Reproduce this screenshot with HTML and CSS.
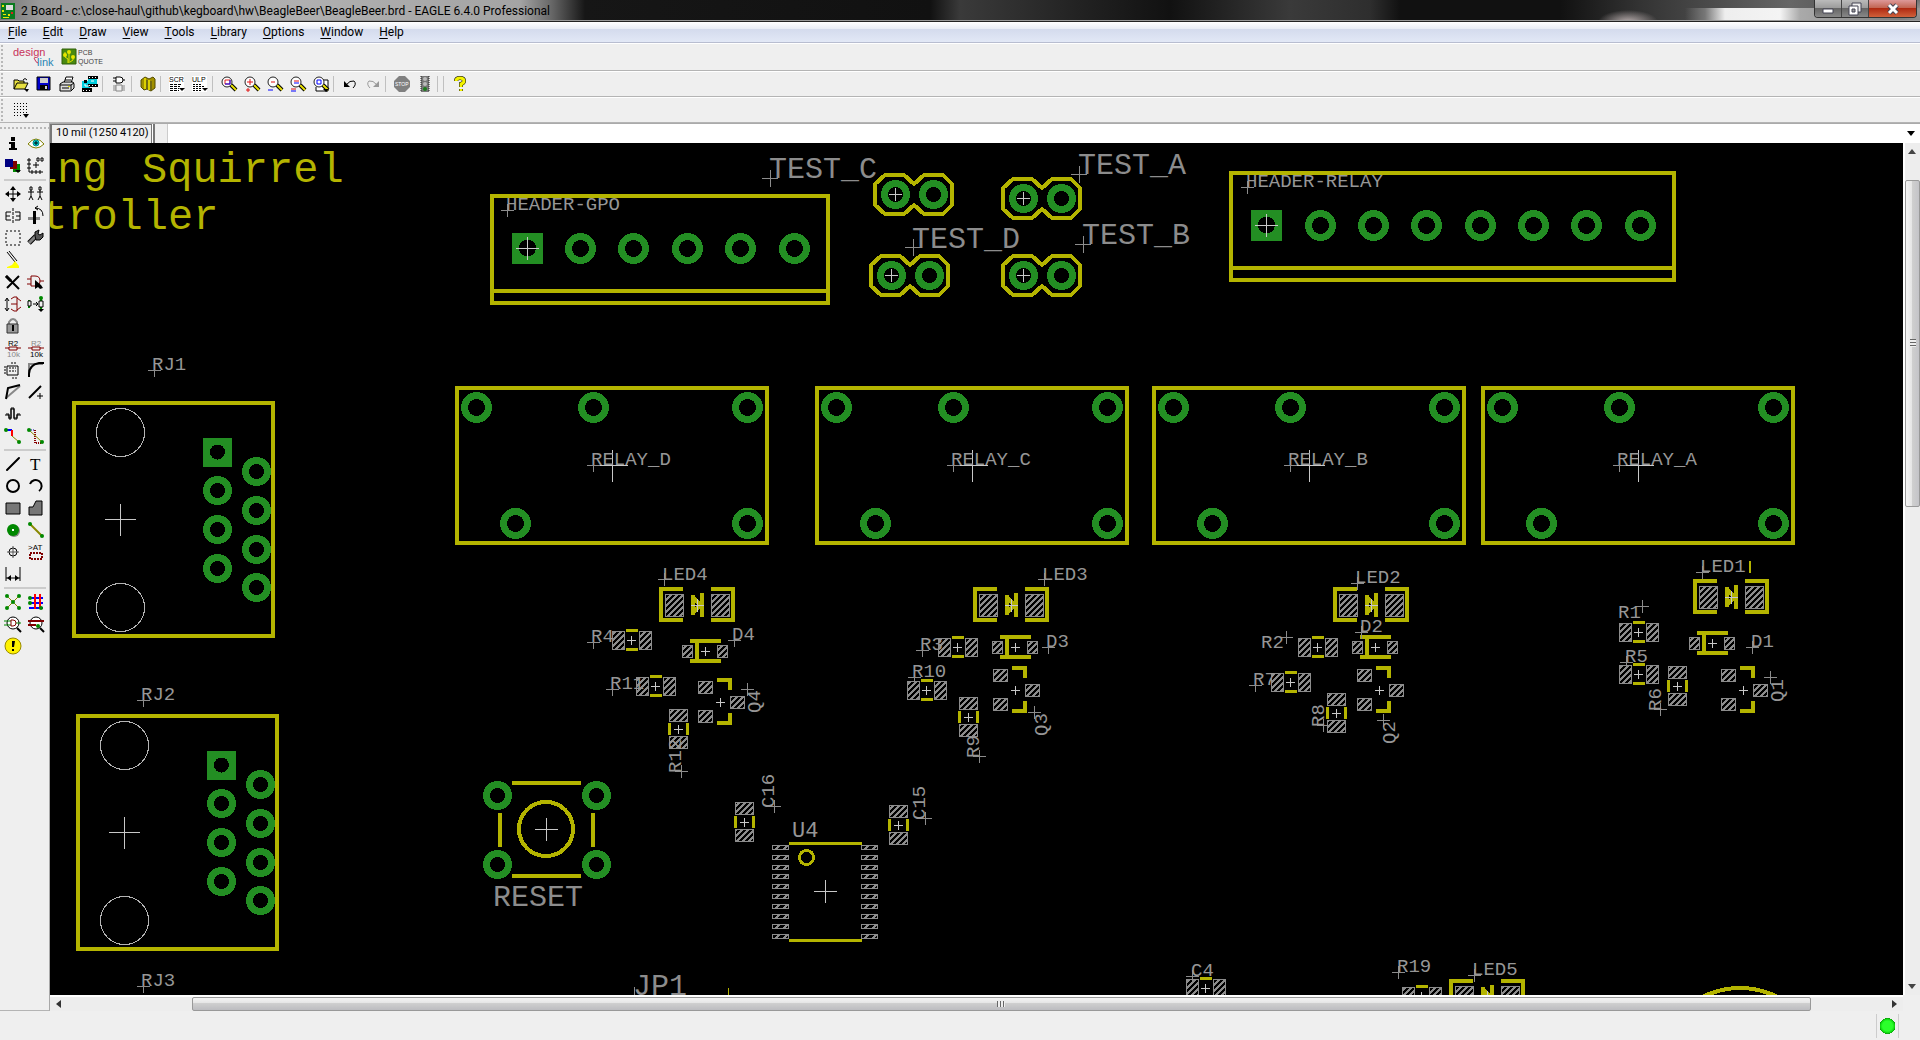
FILE: index.html
```html
<!DOCTYPE html>
<html lang="en">
<head>
<meta charset="utf-8">
<title>2 Board - BeagleBeer.brd - EAGLE 6.4.0 Professional</title>
<link rel="stylesheet" href="styles.css">
</head>
<body>
<header class="titlebar">
  <svg class="appicon" viewBox="0 0 14 16"><path fill="#0a7a1e" d="M0 0h14v16H0z"/><path fill="#ddd" d="M5 2h7v5H5z"/><path fill="#e8e800" d="M1 2h2v2H1zM1 7h2v2H1zM2 11h3v1H2zM7 11h2v2H7zM2 14h6v1H2z"/><path fill="#e02020" d="M10 9h2v2h-2z"/></svg>
  <h1 class="title">2 Board - c:\close-haul\github\kegboard\hw\BeagleBeer\BeagleBeer.brd - EAGLE 6.4.0 Professional</h1>
  <div class="winbtns">
    <button class="win" aria-label="Minimize"><svg width="12" height="12"><path d="M1 6h10v4H1z" fill="#fff" stroke="#445"/></svg></button>
    <button class="win" aria-label="Restore"><svg width="14" height="14"><path d="M4 1h9v9H4z" fill="#eee" stroke="#445"/><path d="M1 4h9v9H1z" fill="#fff" stroke="#445"/><path d="M4 7h3v3H4z" fill="#999" stroke="#445"/></svg></button>
    <button class="win close" aria-label="Close"><svg width="14" height="14"><path d="M3 3l8 8M11 3l-8 8" stroke="#445" stroke-width="5"/><path d="M3 3l8 8M11 3l-8 8" stroke="#fff" stroke-width="3"/></svg></button>
  </div>
</header>
<nav class="menubar">
  <button><u>F</u>ile</button><button><u>E</u>dit</button><button><u>D</u>raw</button><button><u>V</u>iew</button><button><u>T</u>ools</button><button><u>L</u>ibrary</button><button><u>O</u>ptions</button><button><u>W</u>indow</button><button><u>H</u>elp</button>
</nav>
<div class="bar links">
  <button class="wide" aria-label="design link"><svg width="44" height="24"><text class="logo" x="1" y="11" fill="#c8325a">design</text><text class="logo" x="25" y="21" fill="#2a86b4">link</text><path d="M22 13q2 5 4 5" stroke="#c8325a" fill="none"/></svg></button>
  <button class="wide" aria-label="PCB quote"><svg width="44" height="20"><path fill="#4a8a10" stroke="#2f5f08" d="M1 2h14v15H1z"/><path d="M4 5v5l3 2v4M8 4v12M12 10v3l-3 2" stroke="#e6e600" fill="none"/><circle cx="8" cy="5" r="2" fill="#e6e600"/><circle cx="4" cy="8" r="2" fill="#e6e600"/><circle cx="12" cy="10" r="2" fill="#e6e600"/><text class="mini" x="17" y="8" fill="#444">PCB</text><text class="mini" x="17" y="17" fill="#444">QUOTE</text></svg></button>
</div>
<div class="bar actions">
  <button aria-label="Open"><svg viewBox="0 0 16 16"><path d="M1 13V4h4l1 1h5v2M1 13l3-6h11l-3 6z" fill="#e8e040" stroke="#000"/><path d="M10 4q2-3 4 0" fill="none" stroke="#000"/><path d="M11 13h5l-2 3z"/></svg></button>
  <button aria-label="Save"><svg viewBox="0 0 16 16"><path fill="#00c" stroke="#000" d="M1 1h13v13H1z"/><path fill="#ccc" d="M4 2h8v5H4z"/><path d="M4 9h8v5H4z"/><path fill="#ccc" d="M9 10h2v3H9z"/></svg></button>
  <button aria-label="Print"><svg viewBox="0 0 16 16"><path d="M5 7l2-6h7l-2 6M6 4h6" fill="#fff" stroke="#000"/><path d="M1 8l3-2h10l1 2v4l-3 3H1z" fill="#ddd" stroke="#000"/><path d="M1 9h11v5M12 9l3-2M3 12h7" fill="none" stroke="#000"/><path fill="#dd0" d="M9 10h2v1H9z"/></svg></button>
  <button aria-label="CAM processor"><svg viewBox="0 0 16 16"><path fill="#0cd" d="M6 1h9v9H6zM0 5h8v10H0z"/><path d="M6 0h10v3H6zM6 8h10v3H6zM0 12h10v4H0zM2 4h3v3H2z"/><path fill="#fff" d="M7 1h1v1H7zm3 0h1v1h-1zm3 0h1v1h-1zM7 9h1v1H7zm3 0h1v1h-1zm3 0h1v1h-1zM1 14h1v1H1zm3 0h1v1H4zm3 0h1v1H7z"/><path d="M3 8v2h4M9 5h3" stroke="#fff" fill="none"/></svg></button>
  <i class="sep"></i>
  <button aria-label="Schematic"><svg viewBox="0 0 16 16"><path d="M5 1h4q3 0 3 3t-3 3H5zM2 2h3M2 5h3M12 4h2" fill="#fff" stroke="#000"/><path d="M5 9h6v6H5zM2 10h3M2 12h3M2 14h3M11 10h3M11 12h3M11 14h3" fill="none" stroke="#888"/></svg></button>
  <i class="sep"></i>
  <button aria-label="Library"><svg viewBox="0 0 16 16"><path fill="#a09000" stroke="#554c00" d="M1 4l4-3 4 2 4-2 2 2v9l-4 3-4-2-3 1-3-3z"/><path d="M5 2v11M9 4v10" stroke="#dcd000" stroke-width="2"/><path d="M7 4v9M11 5v9" stroke="#442"/></svg></button>
  <i class="sep"></i>
  <button aria-label="Run script"><svg viewBox="0 0 16 16"><path fill="#fff" d="M0 0h15v16H0z"/><text class="mini" x="0" y="6">SCR</text><path d="M1 8.500h12M1 10.500h10M1 12.500h9M1 14.500h9" stroke="#000" stroke-dasharray="3 1"/><path d="M10 12h6l-3 3z"/></svg></button>
  <button aria-label="Run ULP"><svg viewBox="0 0 16 16"><path fill="#fff" d="M0 0h15v16H0z"/><text class="mini" x="0" y="6">ULP</text><path d="M1 8.500h9M1 10.500h12M1 12.500h8M1 14.500h9" stroke="#000" stroke-dasharray="2 1"/><path d="M10 12h6l-3 3z"/></svg></button>
  <i class="sep"></i>
  <button aria-label="Zoom to fit"><svg viewBox="0 0 16 16"><use href="#lens"/><path d="M4 4h5v4H4z" fill="none" stroke="#e02020"/><path d="M4 8h5V4" fill="none" stroke="#00f"/></svg></button>
  <button aria-label="Zoom in"><svg viewBox="0 0 16 16"><use href="#lens"/><path d="M3 6h6M6 3v6M2 14h4M4 12v4" stroke="#e01010"/></svg></button>
  <button aria-label="Zoom out"><svg viewBox="0 0 16 16"><use href="#lens"/><path d="M4 6h4" stroke="#e01010"/><path d="M1 14h5" stroke="#00f"/></svg></button>
  <button aria-label="Redraw"><svg viewBox="0 0 16 16"><use href="#lens"/><path d="M4 5h5M1 13h5" stroke="#e01010"/><path d="M4 7h5M1 15h5" stroke="#00f"/></svg></button>
  <button aria-label="Zoom select"><svg viewBox="0 0 16 16"><path d="M8 4h7v11H3v-4" fill="#fff" stroke="#000"/><use href="#lens"/><path d="M4 4h4v4H4z" fill="none" stroke="#00f"/><path d="M10 13h6l-3 3z"/></svg></button>
  <i class="sep"></i>
  <button aria-label="Undo"><svg viewBox="0 0 16 16"><path d="M4 9q4-5 8-4 3 3-1 7" fill="none" stroke="#000"/><path d="M2 5v6h6z"/></svg></button>
  <button aria-label="Redo"><svg viewBox="0 0 16 16"><path d="M12 9q-4-5-8-4-3 3 1 7" fill="none" stroke="#999"/><path fill="#999" d="M14 5v6H8z"/></svg></button>
  <i class="sep"></i>
  <button aria-label="Stop"><svg viewBox="0 0 16 16"><path fill="#808080" d="M5 0h6l5 5v6l-5 5H5l-5-5V5z"/><text class="micro" x="1" y="10" fill="#fff">STOP</text></svg></button>
  <button aria-label="Go"><svg viewBox="0 0 16 16"><path fill="#777" d="M4 0h8v16H4z"/><path d="M4 0v16M12 0v16" stroke="#222" stroke-dasharray="1 1"/><circle cx="8" cy="3" r="2" fill="#bbb"/><circle cx="8" cy="8" r="2" fill="#bbb"/><circle cx="8" cy="13" r="2" fill="#1c7c1c"/></svg></button>
  <i class="sep"></i><i class="sep"></i>
  <button aria-label="Help"><svg viewBox="0 0 16 16"><path d="M4 5q0-3 4-3t4 3q0 2-3 3v3M9 13v2" fill="none" stroke="#000" stroke-width="4"/><path d="M4 5q0-3 4-3t4 3q0 2-3 3v3M9 13v2" fill="none" stroke="#f4f400" stroke-width="3"/></svg></button>
</div>
<div class="bar gridbar">
  <button aria-label="Grid"><svg viewBox="0 0 16 16"><path d="M1 1.500h13M1 4.500h13M1 7.500h13M1 10.500h13M1 13.500h9" stroke="#000" stroke-dasharray="1 2"/><path d="M10 12h6l-3 4z"/></svg></button>
</div>
<div class="workspace">
<aside class="palette">
  <div class="tools">
    <button aria-label="Info"><svg viewBox="0 0 20 20"><path d="M8 3h4v4H8zM6 8h6v6h2v2H6v-2h2v-4H6z"/></svg></button>
    <button aria-label="Show"><svg viewBox="0 0 20 20"><path d="M2 10q8-10 16 0-8 8-16 0z" fill="#fff" stroke="#808000"/><circle cx="10" cy="9" r="3" fill="#0dd" stroke="#088"/><path d="M10 7v4M8 9h4" stroke="#000"/></svg></button>
    <button aria-label="Display"><svg viewBox="0 0 20 20"><path fill="#080" d="M10 8h7v8h-7z"/><path fill="#800000" d="M7 5h7v8H7z"/><path fill="#000080" d="M2 3h8v8H2z"/><path d="M12 14h6l-3 3z"/></svg></button>
    <button aria-label="Mark"><svg viewBox="0 0 20 20"><path d="M3 2v14h14M1 4h4M1 8h4M1 12h4M6 14v4M10 14v4M14 14v4M7 9h6M10 6v6M11 2h2v3h-2zM15 2h2v3h-2z" fill="none" stroke="#000"/></svg></button>
    <i class="rule"></i>
    <button aria-label="Move"><svg viewBox="0 0 20 20"><path d="M3 10h14M10 3v14" stroke="#000"/><path d="M10 2l3 4H7zM10 18l3-4H7zM2 10l4-3v6zM18 10l-4-3v6z"/></svg></button>
    <button aria-label="Copy"><svg viewBox="0 0 20 20"><path d="M4 3h2v3H4zM2 8h6M5 6v6M3 16l2-4 2 4M13 3h2v3h-2zM11 8h6M14 6v6M12 16l2-4 2 4" fill="none" stroke="#000"/></svg></button>
    <button aria-label="Mirror"><svg viewBox="0 0 20 20"><path d="M3 6h5M3 10h4M3 14h5M3 6v8M12 6h5M13 10h4M12 14h5M17 6v8" fill="none" stroke="#000"/><path d="M10 2v16" stroke="#000" stroke-dasharray="3 1"/></svg></button>
    <button aria-label="Rotate"><svg viewBox="0 0 20 20"><path fill="#888" d="M2 11h12v3H2z"/><path d="M7 5h3v13H7z"/><path d="M9 2q8 0 8 8M9 2l3-2M9 2l3 2" fill="none" stroke="#000"/></svg></button>
    <button aria-label="Group"><svg viewBox="0 0 20 20"><path d="M3 3h14v14H3z" fill="none" stroke="#000" stroke-dasharray="2 2"/></svg></button>
    <button aria-label="Change"><svg viewBox="0 0 20 20"><path d="M3 15l7-7" stroke="#000" stroke-width="5"/><path d="M3 15l7-7" stroke="#808080" stroke-width="3"/><path d="M9 8V4l4-2-1 4 2 1 3-2v4l-3 3h-4z" fill="#555" stroke="#000"/></svg></button>
    <button aria-label="Paste"><svg viewBox="0 0 20 20"><path d="M4 2l8 10M6 1l8 10" stroke="#000"/><path fill="#ff0" d="M12 11l4 5v2H4v-1l5-2z"/></svg></button>
    <span></span>
    <button aria-label="Delete"><svg viewBox="0 0 20 20"><path d="M3 4l13 13M16 4L4 16" stroke="#000" stroke-width="2"/><path d="M3 4l5 5" stroke="#000" stroke-width="3"/></svg></button>
    <button aria-label="Add"><svg viewBox="0 0 20 20"><path d="M5 4h4q5 0 5 5t-5 5H5zM1 7h4M1 12h4M14 9h4" fill="none" stroke="#800000"/><path d="M9 8v9l3-2 2 2 3-1-2-3z"/></svg></button>
    <button aria-label="Pinswap"><svg viewBox="0 0 20 20"><path d="M4 5v11M2 7l2-3 2 3M2 14l2 3 2-3" fill="none" stroke="#000"/><path d="M8 5l3-2h3v14h-3l-3-2M14 4l4 3M14 16l4-3M8 10h6" fill="none" stroke="#800000"/></svg></button>
    <button aria-label="Replace"><svg viewBox="0 0 20 20"><path d="M3 6v8M15 4v13" stroke="#080" stroke-width="2"/><path d="M2 7h3v5H2zM13 7h4v6h-4z" fill="#efefef" stroke="#000"/><path d="M7 10h5M10 8l2 2-2 2" fill="none" stroke="#000"/><circle cx="15" cy="4" r="2" fill="#080"/><path d="M12 15h6l-3 3z"/></svg></button>
    <button aria-label="Lock"><svg viewBox="0 0 20 20"><path d="M6 9V6q4-6 8 0v3" fill="none" stroke="#888" stroke-width="2"/><path d="M4 8h11v9H4z" fill="#999" stroke="#333"/><path d="M9 9h2v6H9z"/></svg></button>
    <span></span>
    <button aria-label="Name"><svg viewBox="0 0 20 20"><text class="tiny" x="5" y="8">R2</text><path d="M2 10h16" stroke="#800000"/><path d="M6 9h8v3H6z" fill="#eee" stroke="#800000"/><text class="tiny" x="4" y="19" fill="#888">10k</text></svg></button>
    <button aria-label="Value"><svg viewBox="0 0 20 20"><text class="tiny" x="5" y="8" fill="#888">R2</text><path d="M2 10h16" stroke="#800000"/><path d="M6 9h8v3H6z" fill="#eee" stroke="#800000"/><text class="tiny" x="4" y="19">10k</text></svg></button>
    <button aria-label="Smash"><svg viewBox="0 0 20 20"><path d="M4 6h11v9H4z" fill="none" stroke="#000"/><path d="M1 7h3M1 10h3M1 13h3M6 8h7M6 11h7M8 3h6M9 18h6" stroke="#000" stroke-dasharray="2 1"/></svg></button>
    <button aria-label="Miter"><svg viewBox="0 0 20 20"><path d="M3 17V4h14" stroke="#888" stroke-width="2" fill="none"/><path d="M3 17v-3q0-9 10-11h5" stroke="#000" stroke-width="2" fill="none"/></svg></button>
    <button aria-label="Split"><svg viewBox="0 0 20 20"><path d="M3 16L17 4" stroke="#888" stroke-width="2"/><path d="M3 17L5 6l12-3" stroke="#000" stroke-width="2" fill="none"/></svg></button>
    <button aria-label="Optimize"><svg viewBox="0 0 20 20"><path d="M3 16L15 4" stroke="#000" stroke-width="2"/><path d="M11 14h6M14 11v6" stroke="#000"/></svg></button>
    <button aria-label="Meander"><svg viewBox="0 0 20 20"><path d="M2 11h4v4h2V5h3v10h3v-4h4" fill="none" stroke="#000" stroke-width="1"/><path d="M3 10h3v4h2V4h3v10h3v-4h3" fill="none" stroke="#000"/></svg></button>
    <span></span>
    <button aria-label="Route"><svg viewBox="0 0 20 20"><path d="M3 4h6" stroke="#00f" stroke-width="2"/><path d="M9 4v6" stroke="#f00" stroke-width="2"/><path d="M9 10l7 6" stroke="#880"/><circle cx="3" cy="4" r="2" fill="#080"/><circle cx="16" cy="16" r="2" fill="#080"/></svg></button>
    <button aria-label="Ripup"><svg viewBox="0 0 20 20"><path d="M3 4h6" stroke="#00a" stroke-dasharray="1 1"/><path d="M9 4v13h7" stroke="#800" stroke-dasharray="1 1" fill="none" stroke-width="2"/><path d="M3 4l13 12" stroke="#880"/><circle cx="3" cy="4" r="2" fill="#080"/><circle cx="16" cy="16" r="2" fill="#080"/></svg></button>
    <i class="rule"></i>
    <button aria-label="Wire"><svg viewBox="0 0 20 20"><path d="M4 16L16 4" stroke="#000" stroke-width="2" stroke-linecap="round"/></svg></button>
    <button aria-label="Text"><svg viewBox="0 0 20 20"><text class="bigt" x="4" y="16">T</text></svg></button>
    <button aria-label="Circle"><svg viewBox="0 0 20 20"><circle cx="10" cy="10" r="6" fill="none" stroke="#000" stroke-width="2"/></svg></button>
    <button aria-label="Arc"><svg viewBox="0 0 20 20"><path d="M4 8a6 6 0 1 1 9 7" fill="none" stroke="#000" stroke-width="2"/></svg></button>
    <button aria-label="Rectangle"><svg viewBox="0 0 20 20"><path d="M3 5h14v11H3z" fill="#777" stroke="#000"/></svg></button>
    <button aria-label="Polygon"><svg viewBox="0 0 20 20"><path d="M3 17V9h4l3-6h6v14z" fill="#777" stroke="#000"/></svg></button>
    <button aria-label="Via"><svg viewBox="0 0 20 20"><circle cx="11" cy="11" r="6" fill="#888"/><circle cx="10" cy="10" r="6" fill="#080"/><path fill="#fff" d="M9 9h2v2H9z"/></svg></button>
    <button aria-label="Signal"><svg viewBox="0 0 20 20"><path d="M4 4l12 12" stroke="#880" stroke-width="2"/><circle cx="4" cy="4" r="2" fill="#080"/><circle cx="16" cy="16" r="2" fill="#080"/></svg></button>
    <button aria-label="Hole"><svg viewBox="0 0 20 20"><circle cx="10" cy="10" r="4" fill="none" stroke="#000"/><path d="M4 10h12M10 4v12" stroke="#555"/></svg></button>
    <button aria-label="Attribute"><svg viewBox="0 0 20 20"><text class="tiny" x="2" y="8">&gt;AT</text><path d="M4 11h12v6H4z" fill="none" stroke="#800000" stroke-width="2" stroke-dasharray="2 1"/></svg></button>
    <button aria-label="Dimension"><svg viewBox="0 0 20 20"><path d="M3 3v14M17 3v14M3 14h14" stroke="#000"/><path d="M4 14l4-3v6zM16 14l-4-3v6z"/></svg></button>
    <span></span>
    <i class="rule"></i>
    <button aria-label="Ratsnest"><svg viewBox="0 0 20 20"><path d="M4 4l12 12M16 4L4 16" stroke="#880"/><g fill="#080"><circle cx="4" cy="4" r="2"/><circle cx="16" cy="4" r="2"/><circle cx="10" cy="10" r="2"/><circle cx="4" cy="16" r="2"/><circle cx="16" cy="16" r="2"/></g></svg></button>
    <button aria-label="Auto"><svg viewBox="0 0 20 20"><path d="M3 6h14M3 11h14M3 16h14" stroke="#00f" stroke-width="2"/><path d="M9 2v15M14 2v15" stroke="#f00" stroke-width="2"/><g fill="#080"><circle cx="4" cy="6" r="2"/><circle cx="4" cy="11" r="2"/><circle cx="15" cy="16" r="2"/></g></svg></button>
    <button aria-label="ERC"><svg viewBox="0 0 20 20"><circle cx="10" cy="9" r="6" fill="#fff" stroke="#000"/><path d="M1 7h7M1 11h7M13 9h5" stroke="#080"/><path d="M8 6h2q3 0 3 3t-3 3H8z" fill="none" stroke="#800000"/><path d="M14 14l4 4" stroke="#000" stroke-width="2"/></svg></button>
    <button aria-label="DRC"><svg viewBox="0 0 20 20"><circle cx="10" cy="9" r="6" fill="#fff" stroke="#000"/><path d="M2 7h16M2 11h8" stroke="#800000" stroke-width="2"/><circle cx="12" cy="12" r="2" fill="#080"/><path d="M14 14l4 4" stroke="#000" stroke-width="2"/></svg></button>
    <button aria-label="Errors"><svg viewBox="0 0 20 20"><circle cx="10" cy="10" r="8" fill="#fff200" stroke="#998a00"/><path d="M9 5h3l-1 6H9zM9 13h2v2H9z"/></svg></button>
  </div>
</aside>
<main class="editor">
  <div class="cmdrow">
    <output class="coords">10 mil (1250 4120)</output>
    <span class="gap"></span>
    <input class="cmd" type="text" aria-label="Command line" autofocus>
    <button class="drop" aria-label="Command history"><svg width="10" height="6"><path d="M1 0h8L5 5z"/></svg></button>
  </div>
  <div class="view">
  <svg class="board" role="img" aria-label="Board layout">
    <defs>
      <g id="lens"><path d="M10 9l5 5" stroke="#000" stroke-width="4"/><path d="M10 9l5 5" stroke="#e8e000" stroke-width="2"/><circle cx="6" cy="6" r="5" fill="#fff" stroke="#222"/></g>
      <pattern id="hatch" width="6" height="6" patternUnits="userSpaceOnUse"><path d="M-1 1L1-1M0 6L6 0M5 7L7 5" stroke="#8c8c8c" stroke-width="2"/></pattern>
      <pattern id="fine" width="8" height="8" patternUnits="userSpaceOnUse"><path d="M-1 1L1-1M0 8L8 0M7 9L9 7" stroke="#8c8c8c" stroke-width="2"/></pattern>
      <path id="x4" class="cross" d="M-4 0H5M0-4V5"/>
      <path id="x6" class="cross" d="M-6 0H7M0-6V7"/>
      <path id="x11" class="cross" d="M-11 0H12M0-11V12"/>
      <path id="x16" class="cross" d="M-15 0H16M0-15V17"/>
      <path id="o" class="org" d="M-6 0H7M0-6V7"/>
      <path id="O" class="org" d="M-8 0H8M0-8V9"/>
      <circle id="pad" class="pad" cx="0.500" cy="0.500" r="11"/>
      <circle id="padL" class="pad" cx="0.500" cy="0.500" r="12"/>
      <path id="sq" class="green" d="M-14-14H15V15H-14ZM-7 0a7 7 0 1 0 15 0a7 7 0 1 0-15 0z"/>
      <path id="sqL" class="green" d="M-15-15H16V16H-15ZM-8 0a8 8 0 1 0 17 0a8 8 0 1 0-17 0z"/>
      <g id="res"><path class="smd" d="M-19-9H-7V9H-19ZM8-9H20V9H8Z"/><path class="silk3" d="M-5-10H7M-5 9H7"/><use href="#x4"/></g>
      <g id="resv"><path class="smd" d="M-9-20H9V-8H-9ZM-9 7H9V19H-9Z"/><path class="silk3" d="M-9-6V6M9-6V6"/><use href="#x4"/></g>
      <g id="led"><path class="smd" d="M-32-11H-14V11H-32ZM14-11H32V11H14Z"/><path class="silk" d="M-14-16H-36V15H-14M14-16H36V15H14M-4-10V10M-4-8L3 0L-4 8M5-12V12"/><use href="#x6"/></g>
      <g id="dio"><path class="smd" d="M-23-6H-13V6H-23ZM12-6H22V6H12Z"/><path class="silk" d="M-15-10H16M-15 10H16M-8-10V10"/><use href="#x4"/></g>
      <g id="tr"><path class="smd" d="M-22-21H-8V-9H-22ZM-22 8H-8V20H-22ZM10-6H24V6H10Z"/><path class="silk" d="M-3-22H10V-12M-3 21H10V11"/><use href="#x4"/></g>
      <g id="jmp"><path class="silk" d="M-39-10L-29-19H-10L0-10L10-19H29L38-10V11L29 20H10L0 11L-10 20H-29L-39 11Z"/><use href="#pad" x="-19"/><use href="#pad" x="19"/><use href="#x6" x="-19"/></g>
      <g id="relay"><path class="silk" d="M0 0H310V155H0Z"/><use href="#padL" x="19" y="19"/><use href="#padL" x="136" y="19"/><use href="#padL" x="290" y="19"/><use href="#padL" x="58" y="135"/><use href="#padL" x="290" y="135"/><use href="#x16" x="155" y="77"/><use href="#o" x="136" y="77"/></g>
      <g id="rj"><path class="silk" d="M0 0H199V233H0Z"/><circle class="ring" cx="46.500" cy="29.500" r="24"/><circle class="ring" cx="46.500" cy="204.500" r="24"/><use href="#x16" x="46" y="116"/><use href="#sq" x="143" y="49"/><use href="#pad" x="143" y="87"/><use href="#pad" x="143" y="126"/><use href="#pad" x="143" y="165"/><use href="#pad" x="182" y="68"/><use href="#pad" x="182" y="107"/><use href="#pad" x="182" y="146"/><use href="#pad" x="182" y="184"/></g>
      <path id="pin" class="smdf" d="M0 0H16V4H0Z"/>
      <g id="pins"><use href="#pin"/><use href="#pin" y="10"/><use href="#pin" y="20"/><use href="#pin" y="29"/><use href="#pin" y="39"/><use href="#pin" y="49"/><use href="#pin" y="59"/><use href="#pin" y="69"/><use href="#pin" y="79"/><use href="#pin" y="89"/></g>
    </defs>
    <g transform="translate(-50 -143)">
      <g class="title-text"><text x="32" y="182">ing</text><text x="142" y="182">Squirrel</text><text x="42" y="229">troller</text></g>

      <use href="#rj" x="74" y="403"/><use href="#rj" x="78" y="716"/>
      <use href="#o" x="154" y="370"/><use href="#o" x="143" y="700"/><use href="#o" x="143" y="986"/>

      <path class="silk" d="M492 196H828V303H492ZM492 291H828M1231 173H1674V280H1231ZM1231 268H1674"/>
      <use href="#sqL" x="527" y="248"/><use href="#x11" x="527" y="248"/>
      <use href="#padL" x="580" y="248"/><use href="#padL" x="633" y="248"/><use href="#padL" x="687" y="248"/><use href="#padL" x="740" y="248"/><use href="#padL" x="794" y="248"/>
      <use href="#sqL" x="1266" y="225"/><use href="#x11" x="1266" y="225"/>
      <use href="#padL" x="1320" y="225"/><use href="#padL" x="1373" y="225"/><use href="#padL" x="1426" y="225"/><use href="#padL" x="1480" y="225"/><use href="#padL" x="1533" y="225"/><use href="#padL" x="1586" y="225"/><use href="#padL" x="1640" y="225"/>
      <use href="#o" x="507" y="210"/><use href="#o" x="1247" y="187"/>

      <use href="#jmp" x="914" y="194"/><use href="#jmp" x="1042" y="198"/><use href="#jmp" x="910" y="275"/><use href="#jmp" x="1042" y="275"/>
      <use href="#O" x="770" y="178"/><use href="#O" x="1079" y="174"/><use href="#O" x="913" y="247"/><use href="#O" x="1083" y="244"/>

      <use href="#relay" x="457" y="388"/><use href="#relay" x="817" y="388"/><use href="#relay" x="1154" y="388"/><use href="#relay" x="1483" y="388"/>

      <use href="#led" x="697" y="605"/><use href="#led" x="1011" y="605"/><use href="#led" x="1371" y="605"/><use href="#led" x="1731" y="597"/><use href="#led" x="1487" y="997"/>
      <path class="silk2" d="M1750 561V573"/>
      <use href="#o" x="664" y="579"/><use href="#o" x="1044" y="579"/><use href="#o" x="1357" y="583"/><use href="#o" x="1702" y="572"/><use href="#o" x="1474" y="975"/>

      <use href="#res" x="631" y="640"/><use href="#res" x="655" y="686"/><use href="#res" x="957" y="647"/><use href="#res" x="926" y="690"/><use href="#res" x="1317" y="647"/><use href="#res" x="1290" y="682"/><use href="#res" x="1638" y="632"/><use href="#res" x="1638" y="674"/><use href="#res" x="1205" y="988"/><use href="#res" x="1421" y="996"/>
      <use href="#resv" x="678" y="729"/><use href="#resv" x="968" y="717"/><use href="#resv" x="1336" y="713"/><use href="#resv" x="1677" y="686"/><use href="#resv" x="744" y="822"/><use href="#resv" x="898" y="825"/>
      <use href="#dio" x="705" y="651"/><use href="#dio" x="1015" y="647"/><use href="#dio" x="1375" y="647"/><use href="#dio" x="1712" y="643"/>
      <use href="#tr" x="720" y="702"/><use href="#tr" x="1015" y="690"/><use href="#tr" x="1379" y="690"/><use href="#tr" x="1743" y="690"/>

      <use href="#o" x="593" y="642"/><use href="#o" x="734" y="640"/><use href="#o" x="612" y="689"/><use href="#o" x="922" y="650"/><use href="#o" x="914" y="677"/><use href="#o" x="1048" y="647"/><use href="#o" x="1286" y="637"/><use href="#o" x="1255" y="685"/><use href="#o" x="1361" y="632"/><use href="#o" x="1642" y="606"/><use href="#o" x="1626" y="662"/><use href="#o" x="1752" y="647"/><use href="#o" x="1192" y="976"/><use href="#o" x="1398" y="972"/>
      <use href="#o" x="681" y="771"/><use href="#o" x="979" y="756"/><use href="#o" x="747" y="689"/><use href="#o" x="1034" y="712"/><use href="#o" x="1383" y="720"/><use href="#o" x="1323" y="725"/><use href="#o" x="1770" y="677"/><use href="#o" x="1660" y="709"/><use href="#o" x="774" y="806"/><use href="#o" x="925" y="818"/>

      <use href="#pad" x="497" y="795"/><use href="#pad" x="596" y="795"/><use href="#pad" x="497" y="864"/><use href="#pad" x="596" y="864"/>
      <path class="silk" d="M512 783H581M512 876H581M500 813V847M593 813V847"/><circle class="silk" cx="546" cy="829" r="27"/><use href="#x11" x="546" y="829"/>

      <path class="silk3" d="M789 843H862M789 940H862"/><circle class="silk3" cx="806.500" cy="857.500" r="7"/><use href="#x11" x="825" y="891"/>
      <use href="#pins" x="772" y="845"/><use href="#pins" x="861" y="845"/>
      <path class="org" d="M634 987V1000"/><path class="silk1" d="M728 988V1000"/>
      <circle class="silk" cx="1740" cy="1071" r="83"/>

      <g class="label">
        <text x="152" y="370">RJ1</text><text x="141" y="700">RJ2</text><text x="141" y="986">RJ3</text>
        <text x="506" y="210">HEADER-GPO</text><text x="1246" y="187">HEADER-RELAY</text>
        <text x="591" y="465">RELAY_D</text><text x="951" y="465">RELAY_C</text><text x="1288" y="465">RELAY_B</text><text x="1617" y="465">RELAY_A</text>
        <text x="662" y="580">LED4</text><text x="1042" y="580">LED3</text><text x="1355" y="583">LED2</text><text x="1700" y="572">LED1</text><text x="1472" y="975">LED5</text>
        <text x="591" y="642">R4</text><text x="732" y="640">D4</text><text x="610" y="689">R11</text><text x="920" y="650">R3</text><text x="912" y="677">R10</text><text x="1046" y="647">D3</text>
        <text x="1261" y="648">R2</text><text x="1253" y="685">R7</text><text x="1360" y="632">D2</text><text x="1618" y="618">R1</text><text x="1625" y="662">R5</text><text x="1751" y="647">D1</text><text x="1191" y="976">C4</text><text x="1397" y="972">R19</text>
        <text transform="translate(681 773) rotate(-90)">R12</text><text transform="translate(979 758) rotate(-90)">R9</text><text transform="translate(760 713) rotate(-90)">Q4</text><text transform="translate(1047 736) rotate(-90)">Q3</text><text transform="translate(1395 744) rotate(-90)">Q2</text><text transform="translate(1324 727) rotate(-90)">R8</text><text transform="translate(1783 702) rotate(-90)">Q1</text><text transform="translate(1661 711) rotate(-90)">R6</text><text transform="translate(774 808) rotate(-90)">C16</text><text transform="translate(925 820) rotate(-90)">C15</text>
      </g>
      <text class="label mid" x="792" y="837">U4</text>
      <g class="label big"><text x="769" y="178">TEST_C</text><text x="1078" y="174">TEST_A</text><text x="912" y="248">TEST_D</text><text x="1082" y="244">TEST_B</text><text x="493" y="906">RESET</text><text x="633" y="995">JP1</text></g>
    </g>
  </svg>
  <div class="vscroll"><button aria-label="Scroll up"><svg width="9" height="6"><path fill="#444" d="M0 5h8L4 0z"/></svg></button><div class="vtrack"><div class="vthumb"><i></i></div></div><button aria-label="Scroll down"><svg width="9" height="6"><path fill="#444" d="M0 0h8L4 5z"/></svg></button></div>
  <div class="hscroll"><button aria-label="Scroll left"><svg width="6" height="9"><path fill="#333" d="M5 0v8L0 4z"/></svg></button><div class="htrack"><div class="hthumb"><i></i></div></div><button aria-label="Scroll right"><svg width="6" height="9"><path fill="#333" d="M0 0v8l5-4z"/></svg></button></div>
  </div>
</main>
</div>
<footer class="status"><span class="lamp"></span></footer>
</body>
</html>
```
FILE: styles.css
```css
* { box-sizing: border-box; }
body {
  margin: 0;
  height: 100vh;
  display: flex;
  flex-direction: column;
  background: #efefef;
  font-family: Roboto, "Noto Sans", sans-serif;
  font-size: 12px;
  color: #000;
  overflow: hidden;
}
button {
  border: 0;
  padding: 0;
  background: none;
  font: inherit;
  color: inherit;
  display: flex;
  align-items: center;
  justify-content: center;
}
svg { display: block; }

/* window frame */
.titlebar {
  height: 22px;
  flex: none;
  display: flex;
  align-items: center;
  border-bottom: 1px solid #222;
  box-shadow: inset 0 -1px #999;
  background:
    radial-gradient(ellipse 30px 12px at 1628px 22px, #b9aeae, transparent),
    radial-gradient(ellipse 20px 22px at 100% 50%, #999, transparent),
    linear-gradient(90deg, transparent 1685px, #777 1705px, #eee 1725px, #f4f4f4 1780px, #aaa 1800px, #777) no-repeat 0 8px / 100% 14px,
    linear-gradient(90deg, #777 0, #9a9a9a 40px, #b0b0b0 300px, #a4a4a4 520px, #666 552px, #161616 585px, #111 930px, #3a3a3a 960px, #222 1080px, #111 1170px, #3a3a3a 1290px, #2e2e2e 1370px, #111 1400px, #111 1560px, #333 1640px, #666 1790px, #444);
}
.appicon { width: 14px; height: 16px; margin: 0 6px 0 1px; }
.title { margin: 0; flex: 1; font-size: 12px; font-weight: 400; line-height: 20px; white-space: nowrap; }
.winbtns { display: flex; align-self: flex-start; margin-right: 3px; border: 1px solid #333; border-top: 0; border-radius: 0 0 4px 4px; overflow: hidden; }
.win { width: 27px; height: 17px; border-right: 1px solid #444; background: linear-gradient(#bbb, #999 50%, #666 50%, #888); }
.win.close { width: 47px; border-right: 0; background: linear-gradient(#d99, #c0604c 50%, #b02a12 50%, #d0603a); }

.menubar {
  height: 21px;
  flex: none;
  display: flex;
  background: linear-gradient(#fff, #e8ecf5 35%, #d4dbed 36%, #e2e8f6);
  border-bottom: 1px solid #b8bdd0;
}
.menubar button { padding: 0 8px; }
.menubar u { text-underline-offset: 2px; }

/* toolbars */
.bar {
  flex: none;
  height: 26px;
  display: flex;
  align-items: center;
  padding-left: 9px;
  border-top: 1px solid #fff;
  border-bottom: 1px solid #b4b4b4;
  background: linear-gradient(#efefef 2px, #b8b8b8 2px) 1px 3px / 2px 4px repeat-y, #efefef;
}
.bar.links { height: 28px; }
.bar.actions button, .gridbar button { width: 23px; height: 22px; }
.bar.actions svg, .gridbar svg { width: 16px; height: 16px; overflow: visible; }
.wide { margin-left: 3px; }
.wide + .wide { margin-left: 5px; }
.sep { width: 6px; height: 16px; border-left: 1px solid #c0c0c0; margin-left: 1px; margin-right: -1px; }
.logo { font: 11px "Liberation Sans", sans-serif; }
.mini { font: 7px "Liberation Sans", sans-serif; }
.micro { font: 5px "Liberation Sans", sans-serif; }
.tiny { font: 8px "Liberation Sans", sans-serif; }
.bigt { font: 17px "Liberation Serif", serif; }

.workspace { flex: 1; min-height: 0; display: flex; }
.palette {
  width: 50px;
  flex: none;
  padding: 10px 3px 0 2px;
  border-right: 1px solid #a8a8a8;
  border-bottom: 1px solid #b4b4b4;
  background: linear-gradient(90deg, #efefef 2px, #b8b8b8 2px) 2px 4px / 4px 2px repeat-x, #efefef;
}
.tools { display: grid; grid-template-columns: 23px 23px; grid-auto-rows: auto; }
.tools button { width: 22px; height: 22px; }
.tools svg { width: 20px; height: 20px; overflow: visible; }
.rule { grid-column: 1 / 3; height: 2px; margin: 2px; background: #ccc; }

.editor { flex: 1; min-width: 0; display: flex; flex-direction: column; }
.cmdrow { height: 20px; flex: none; display: flex; background: #fff; border-top: 1px solid #aaa; }
.coords { width: 102px; margin-right: 1px; background: #efefef; border: 1px solid #777; border-width: 1px 1px 0 2px; padding-left: 4px; font-size: 11px; line-height: 16px; white-space: nowrap; }
.gap { width: 15px; background: #efefef; border-left: 2px solid #777; border-right: 1px solid #ccc; }
.cmd { flex: 1; border: 0; outline: 0; padding: 0 6px; font: 12px Roboto, sans-serif; }
.drop { width: 19px; }

.view {
  flex: 1;
  min-height: 0;
  display: grid;
  grid-template: minmax(0, 1fr) 16px / minmax(0, 1fr) 17px;
}
.board { width: 100%; height: 100%; background: #000; shape-rendering: crispEdges; }
.vscroll { display: flex; flex-direction: column; background: #ededed; border-left: 2px solid #fff; }
.vscroll button { height: 17px; }
.hscroll { display: flex; background: #ededed; border-top: 2px solid #fff; }
.hscroll button { width: 17px; }
.vtrack, .htrack { flex: 1; display: flex; }
.vtrack { flex-direction: column; }
.vtrack::before { content: ""; flex: 20; }
.vtrack::after { content: ""; flex: 473; }
.vthumb { flex: 326; border: 1px solid #999; border-radius: 2px; background: linear-gradient(90deg, #f4f4f4, #e4e4e4 50%, #cfcfcf 50%, #c4c4c8); display: flex; align-items: center; justify-content: center; }
.htrack::before { content: ""; flex: 125; }
.htrack::after { content: ""; flex: 75; }
.hthumb { flex: 1619; border: 1px solid #999; border-radius: 2px; background: linear-gradient(#f4f4f4, #e4e4e4 45%, #cfcfcf 45%, #bcbcc0); display: flex; align-items: center; justify-content: center; }
.hthumb i { width: 8px; height: 6px; background: repeating-linear-gradient(90deg, #666 0 1px, #eee 1px 3px); }
.vthumb i { width: 6px; height: 8px; background: repeating-linear-gradient(#666 0 1px, #eee 1px 3px); }

.status { height: 29px; flex: none; display: flex; justify-content: flex-end; align-items: center; padding-right: 21px; }
.lamp { width: 23px; height: 24px; border-left: 1px solid #ccc; border-right: 1px solid #ccc; background: radial-gradient(circle at 50% 50%, #2bff2b 0 5px, #0fd60f 7px, #0a8f0a 8px, transparent 8px); }

/* board layers */
.silk, .silk1, .silk2, .silk3 { fill: none; stroke: #b4b400; stroke-width: 4; }
.silk1 { stroke-width: 1; }
.silk2 { stroke-width: 2; }
.silk3 { stroke-width: 3; }
.pad { fill: none; stroke: #238e23; stroke-width: 7; }
.green { fill: #238e23; fill-rule: evenodd; }
.cross { fill: none; stroke: #c8c8c8; }
.org { fill: none; stroke: #8c8c8c; }
.ring { fill: none; stroke: #b4b4b4; }
.smd { fill: url(#hatch); stroke: #8c8c8c; }
.smdf { fill: url(#fine); stroke: #8c8c8c; }
.label { fill: #969696; font: 19px "Liberation Mono", monospace; }
.label.mid { font-size: 22px; }
.label.big { fill: #8c8c8c; font-size: 30px; }
.title-text { fill: #b4b400; font: 42px "Liberation Mono", monospace; }
```
